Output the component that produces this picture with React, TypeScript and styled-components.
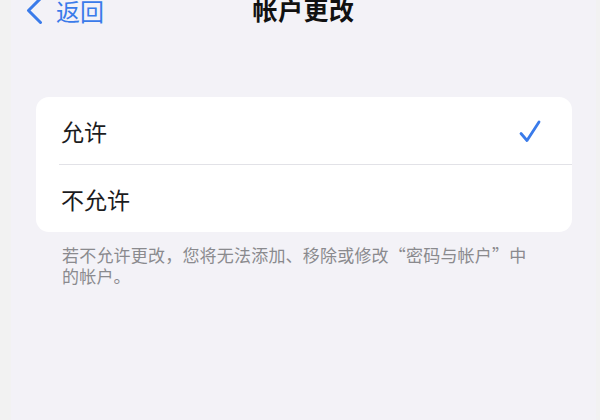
import React, { useState } from 'react';
import styled, { createGlobalStyle } from 'styled-components';

const GlobalStyle = createGlobalStyle`
  html, body {
    margin: 0;
    padding: 0;
    background: #f2f2f2;
  }
  body {
    font-family: "Noto Sans CJK SC", "Noto Sans", sans-serif;
    -webkit-font-smoothing: antialiased;
  }
`;

const Screen = styled.div`
  margin: 0 4px 0 11px;
  min-height: 420px;
  background: #f3f2f7;
  overflow: hidden;
`;

const NavBar = styled.div`
  position: relative;
  display: flex;
  align-items: center;
  justify-content: center;
  height: 25px;
  margin-top: -3px;
`;

const BackButton = styled.button`
  position: absolute;
  left: 15px;
  top: 0;
  display: flex;
  align-items: center;
  gap: 13px;
  padding: 0;
  border: none;
  background: none;
  color: #3a7bea;
  font-family: inherit;
  font-size: 24px;
  line-height: 25px;
  cursor: pointer;
`;

const Title = styled.h1`
  margin: 0;
  font-size: 25px;
  line-height: 25px;
  font-weight: 700;
  color: #111;
  letter-spacing: 0.5px;
`;

const Card = styled.div`
  margin: 75px 24px 0 25px;
  background: #fff;
  border-radius: 13px;
  overflow: hidden;
`;

const Row = styled.button<{ $divider: boolean }>`
  position: relative;
  display: flex;
  align-items: center;
  justify-content: space-between;
  width: 100%;
  height: ${p => (p.$divider ? 68 : 67)}px;
  padding: 0 31px 0 25px;
  border: none;
  background: none;
  font-family: inherit;
  font-size: 23px;
  color: #1c1c1e;
  text-align: left;
  cursor: pointer;

  &:after {
    content: '';
    display: ${p => (p.$divider ? 'block' : 'none')};
    position: absolute;
    left: 23px;
    right: 0;
    bottom: 0;
    height: 1px;
    background: #e2e2e7;
  }
`;

const Footer = styled.p`
  margin: 12px 0 0 51px;
  max-width: 472px;
  font-size: 17px;
  letter-spacing: 0.2px;
  line-height: 21px;
  color: #8a8a8e;
`;

const Check = () => (
  <svg width="22" height="23" viewBox="0 0 22 23" fill="none">
    <path
      d="M2 13.5 L8 20.5 L20 2"
      stroke="#3a7bea"
      strokeWidth="2.8"
      strokeLinecap="round"
      strokeLinejoin="round"
    />
  </svg>
);

const Chevron = () => (
  <svg width="17" height="27" viewBox="0 0 17 27" fill="none">
    <path
      d="M14.5 1.5 L2.5 13.5 L14.5 25.5"
      stroke="#3a7bea"
      strokeWidth="3"
      strokeLinecap="round"
      strokeLinejoin="round"
    />
  </svg>
);

const options = ['允许', '不允许'];

export default function App() {
  const [selected, setSelected] = useState(0);

  return (
    <>
      <GlobalStyle />
      <Screen>
        <NavBar>
          <BackButton>
            <Chevron />
            返回
          </BackButton>
          <Title>帐户更改</Title>
        </NavBar>

        <Card>
          {options.map((label, i) => (
            <Row key={label} $divider={i < options.length - 1} onClick={() => setSelected(i)}>
              {label}
              {selected === i && <Check />}
            </Row>
          ))}
        </Card>

        <Footer>
          若不允许更改，您将无法添加、移除或修改“密码与帐户”中的帐户。
        </Footer>
      </Screen>
    </>
  );
}
